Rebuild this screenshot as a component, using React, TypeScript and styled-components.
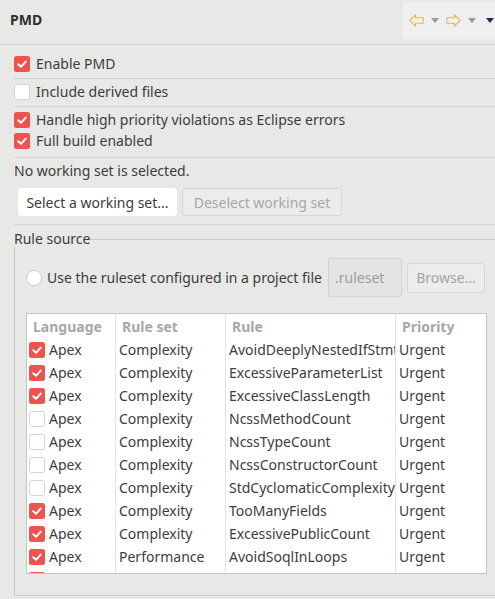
import React from "react";
import styled, { createGlobalStyle } from "styled-components";

const Global = createGlobalStyle`
  html, body { margin: 0; padding: 0; background: #e8e8e7; }
  body {
    font-family: "Noto Sans", "Open Sans", sans-serif;
    font-size: 14px;
    color: #3c3c3c;
    overflow: hidden;
  }
  * { box-sizing: border-box; }
`;

const Page = styled.div`
  width: 495px;
  height: 599px;
  overflow: hidden;
  display: flex;
  flex-direction: column;
`;

const Header = styled.header`
  height: 45px;
  flex: none;
  border-bottom: 1px solid #d3d3d2;
  display: flex;
  align-items: flex-start;
  justify-content: space-between;
`;

const Title = styled.h1`
  margin: 0;
  padding: 11px 0 0 10px;
  font-size: 14px;
  line-height: 18px;
  font-weight: 700;
  color: #2e2e2e;
`;

const Toolbar = styled.div`
  margin-top: 2px;
  width: 92px;
  height: 37px;
  background: #efefef;
  display: flex;
  align-items: center;
  gap: 7px;
  padding-left: 6px;
`;

const MenuArrow = styled.svg<{ $dark?: boolean }>`
  width: 8px;
  height: 5px;
  margin-left: ${(p) => (p.$dark ? "3px" : "0")};
  fill: ${(p) => (p.$dark ? "#3b1f5c" : "#9a9a9a")};
`;

const NavArrow = styled.svg`
  width: 15px;
  height: 13px;
`;

const Content = styled.main`
  padding-left: 14px;
  display: flex;
  flex-direction: column;
`;

const CheckRow = styled.label<{ $top?: number }>`
  height: 21px;
  margin-top: ${(p) => p.$top ?? 0}px;
  display: flex;
  align-items: center;
  gap: 6px;
  line-height: 21px;
`;

const Separator = styled.div<{ $top?: number; $bottom?: number }>`
  height: 1px;
  background: #d3d3d2;
  margin-top: ${(p) => p.$top ?? 4}px;
  margin-bottom: ${(p) => p.$bottom ?? 2}px;
`;

const Info = styled.div`
  height: 20px;
  line-height: 20px;
  margin-top: 3px;
`;

const ButtonRow = styled.div`
  display: flex;
  gap: 5px;
  padding-left: 4px;
  margin-top: 7px;
`;

const Button = styled.button<{ $w: number; $disabled?: boolean }>`
  width: ${(p) => p.$w}px;
  height: 28px;
  padding: 0;
  font: inherit;
  font-size: 14px;
  border-radius: 3px;
  border: 1px solid ${(p) => (p.$disabled ? "#d6d6d5" : "#ffffff")};
  background: ${(p) => (p.$disabled ? "#ececeb" : "#ffffff")};
  color: ${(p) => (p.$disabled ? "#a7a7a7" : "#3c3c3c")};
  display: flex;
  align-items: center;
  justify-content: center;
`;

const GroupHead = styled.div`
  margin-top: 6px;
  height: 16px;
  display: flex;
  align-items: center;
`;

const GroupLabel = styled.span`
  line-height: 16px;
`;

const GroupLine = styled.div`
  flex: 1;
  height: 1px;
  background: #c9c9c8;
`;

const GroupBody = styled.section`
  border-left: 1px solid #c9c9c8;
  border-bottom: 1px solid #c9c9c8;
  padding: 11px 0 21px 11px;
  display: flex;
  flex-direction: column;
`;

const RadioRow = styled.div`
  height: 39px;
  display: flex;
  align-items: center;
`;

const Radio = styled.span`
  width: 16px;
  height: 16px;
  border-radius: 50%;
  border: 1px solid #cfcfce;
  background: #ffffff;
  flex: none;
  margin-right: 5px;
`;

const Field = styled.div`
  width: 74px;
  height: 39px;
  margin-left: 6px;
  padding-left: 6px;
  border: 1px solid #d2d2d1;
  border-radius: 2px;
  background: #e4e4e3;
  color: #9d9d9d;
  display: flex;
  align-items: center;
`;

const SmallButton = styled.div`
  width: 78px;
  height: 30px;
  margin-left: 5px;
  border: 1px solid #d6d6d5;
  border-radius: 3px;
  background: #ececeb;
  color: #a3a3a3;
  display: flex;
  align-items: center;
  justify-content: center;
`;

const Table = styled.div`
  margin-top: 16px;
  width: 461px;
  height: 261px;
  border: 1px solid #c6c6c5;
  background: #ffffff;
  overflow: hidden;
`;

const Row = styled.div<{ $head?: boolean }>`
  display: grid;
  grid-template-columns: 89px 110px 170px 1fr;
  height: ${(p) => (p.$head ? 24 : 23)}px;
`;

const Cell = styled.div<{ $head?: boolean; $last?: boolean }>`
  border-right: ${(p) => (p.$last ? "none" : "1px solid #e4e4e4")};
  padding-left: ${(p) => (p.$head ? 6 : 3)}px;
  display: flex;
  align-items: center;
  gap: 4px;
  white-space: nowrap;
  overflow: hidden;
  font-weight: ${(p) => (p.$head ? 700 : 400)};
  color: ${(p) => (p.$head ? "#a7a7a7" : "#3c3c3c")};
`;

const LangCell = styled(Cell)`
  padding-left: 2px;
`;

const BoxSvg = styled.svg`
  width: 16px;
  height: 16px;
  flex: none;
`;

function Check({ on }: { on: boolean }) {
  return (
    <BoxSvg viewBox="0 0 16 16">
      {on ? (
        <>
          <rect x="0" y="0" width="16" height="16" rx="2.5" fill="#ef5350" />
          <path
            d="M4.3 8.3 L7 10.8 L11.7 5.6"
            fill="none"
            stroke="#ffffff"
            strokeWidth="2"
            strokeLinecap="round"
            strokeLinejoin="round"
          />
        </>
      ) : (
        <rect x="0.5" y="0.5" width="15" height="15" rx="2" fill="#ffffff" stroke="#d3d3d2" />
      )}
    </BoxSvg>
  );
}

function Nav({ dir }: { dir: "left" | "right" }) {
  const pts =
    dir === "left"
      ? "0.8,6.5 6.5,0.8 6.5,3.8 14.2,3.8 14.2,9.2 6.5,9.2 6.5,12.2"
      : "14.2,6.5 8.5,0.8 8.5,3.8 0.8,3.8 0.8,9.2 8.5,9.2 8.5,12.2";
  return (
    <NavArrow viewBox="0 0 15 13">
      <polygon points={pts} fill="#fdf2d6" stroke="#d9b676" strokeWidth="1.1" strokeLinejoin="round" />
    </NavArrow>
  );
}

function Drop({ dark }: { dark?: boolean }) {
  return (
    <MenuArrow viewBox="0 0 8 5" $dark={dark}>
      <polygon points="0,0 8,0 4,5" />
    </MenuArrow>
  );
}

type Rule = { on: boolean; set: string; rule: string };

const rules: Rule[] = [
  { on: true, set: "Complexity", rule: "AvoidDeeplyNestedIfStmts" },
  { on: true, set: "Complexity", rule: "ExcessiveParameterList" },
  { on: true, set: "Complexity", rule: "ExcessiveClassLength" },
  { on: false, set: "Complexity", rule: "NcssMethodCount" },
  { on: false, set: "Complexity", rule: "NcssTypeCount" },
  { on: false, set: "Complexity", rule: "NcssConstructorCount" },
  { on: false, set: "Complexity", rule: "StdCyclomaticComplexity" },
  { on: true, set: "Complexity", rule: "TooManyFields" },
  { on: true, set: "Complexity", rule: "ExcessivePublicCount" },
  { on: true, set: "Performance", rule: "AvoidSoqlInLoops" },
  { on: true, set: "Performance", rule: "AvoidSoslInLoops" },
];

export default function App() {
  return (
    <Page>
      <Global />
      <Header>
        <Title>PMD</Title>
        <Toolbar>
          <Nav dir="left" />
          <Drop />
          <Nav dir="right" />
          <Drop />
          <Drop dark />
        </Toolbar>
      </Header>
      <Content>
        <CheckRow $top={8}>
          <Check on />
          Enable PMD
        </CheckRow>
        <Separator />
        <CheckRow>
          <Check on={false} />
          Include derived files
        </CheckRow>
        <Separator />
        <CheckRow>
          <Check on />
          Handle high priority violations as Eclipse errors
        </CheckRow>
        <CheckRow>
          <Check on />
          Full build enabled
        </CheckRow>
        <Separator $top={6} $bottom={0} />
        <Info>No working set is selected.</Info>
        <ButtonRow>
          <Button $w={159}>Select a working set...</Button>
          <Button $w={160} $disabled>
            Deselect working set
          </Button>
        </ButtonRow>
        <Separator $top={8} $bottom={0} />
        <GroupHead>
          <GroupLabel>Rule source</GroupLabel>
          <GroupLine />
        </GroupHead>
        <GroupBody>
          <RadioRow>
            <Radio />
            Use the ruleset configured in a project file
            <Field>.ruleset</Field>
            <SmallButton>Browse...</SmallButton>
          </RadioRow>
          <Table>
            <Row $head>
              <Cell $head>Language</Cell>
              <Cell $head>Rule set</Cell>
              <Cell $head>Rule</Cell>
              <Cell $head $last>
                Priority
              </Cell>
            </Row>
            {rules.map((r, i) => (
              <Row key={i}>
                <LangCell>
                  <Check on={r.on} />
                  Apex
                </LangCell>
                <Cell>{r.set}</Cell>
                <Cell>{r.rule}</Cell>
                <Cell $last>Urgent</Cell>
              </Row>
            ))}
          </Table>
        </GroupBody>
      </Content>
    </Page>
  );
}
